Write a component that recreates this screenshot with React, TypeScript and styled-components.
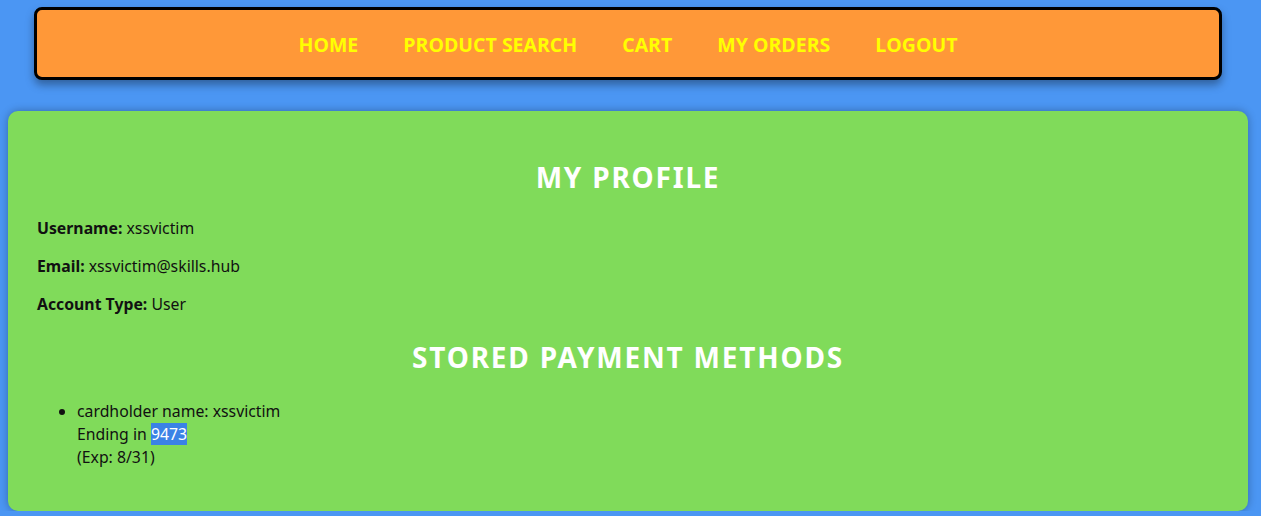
import styled, { createGlobalStyle } from "styled-components";

const GlobalStyle = createGlobalStyle`
  html, body {
    margin: 0;
    padding: 0;
    background: #4b96f3;
    font-family: "Noto Sans", "Open Sans", sans-serif;
  }
`;

const Page = styled.div`
  width: 1240px;
  margin-left: 8px;
  padding-top: 7px;
  box-sizing: border-box;
`;

const Nav = styled.nav`
  margin: 0 26px;
  height: 73px;
  box-sizing: border-box;
  background: #ff9838;
  border: 3px solid #000;
  border-radius: 8px;
  box-shadow: 0 5px 8px rgba(0, 0, 0, 0.35);
  display: flex;
  justify-content: center;
  align-items: center;
  gap: 45px;
  padding-top: 2px;
`;

const NavLink = styled.a`
  color: #ffff00;
  font-family: "Open Sans", "Noto Sans", sans-serif;
  font-size: 19.5px;
  font-weight: 700;
  text-decoration: none;
  text-transform: uppercase;
  cursor: pointer;
`;

const Card = styled.main`
  margin-top: 31px;
  background: #80db5a;
  border-radius: 10px;
  box-shadow: 0 0 8px rgba(0, 0, 0, 0.3);
  padding: 24px 29px 42px;
  color: #111;
`;

const Heading = styled.h2`
  margin: 25px 0 23px;
  text-align: center;
  color: #fff;
  font-size: 28px;
  line-height: 34px;
  font-weight: 700;
  letter-spacing: 1.8px;
`;

const Field = styled.p`
  margin: 12px 0 16px;
  font-size: 15.8px;
  line-height: 22px;
`;

const List = styled.ul`
  margin: 26px 0 0;
  padding-left: 40px;
  font-size: 15.8px;
  line-height: 23px;
`;

const Selected = styled.span`
  background: #3a82e6;
  color: #fff;
`;

const links = ["Home", "Product Search", "Cart", "My Orders", "Logout"];

const App = () => {
  return (
    <>
      <GlobalStyle />
      <Page>
        <Nav>
          {links.map(link => (
            <NavLink key={link}>{link}</NavLink>
          ))}
        </Nav>
        <Card>
          <Heading>MY PROFILE</Heading>
          <Field>
            <strong>Username:</strong> xssvictim
          </Field>
          <Field>
            <strong>Email:</strong> xssvictim@skills.hub
          </Field>
          <Field>
            <strong>Account Type:</strong> User
          </Field>
          <Heading>STORED PAYMENT METHODS</Heading>
          <List>
            <li>
              cardholder name: xssvictim
              <br />
              Ending in <Selected>9473</Selected>
              <br />
              (Exp: 8/31)
            </li>
          </List>
        </Card>
      </Page>
    </>
  );
};

export default App;
